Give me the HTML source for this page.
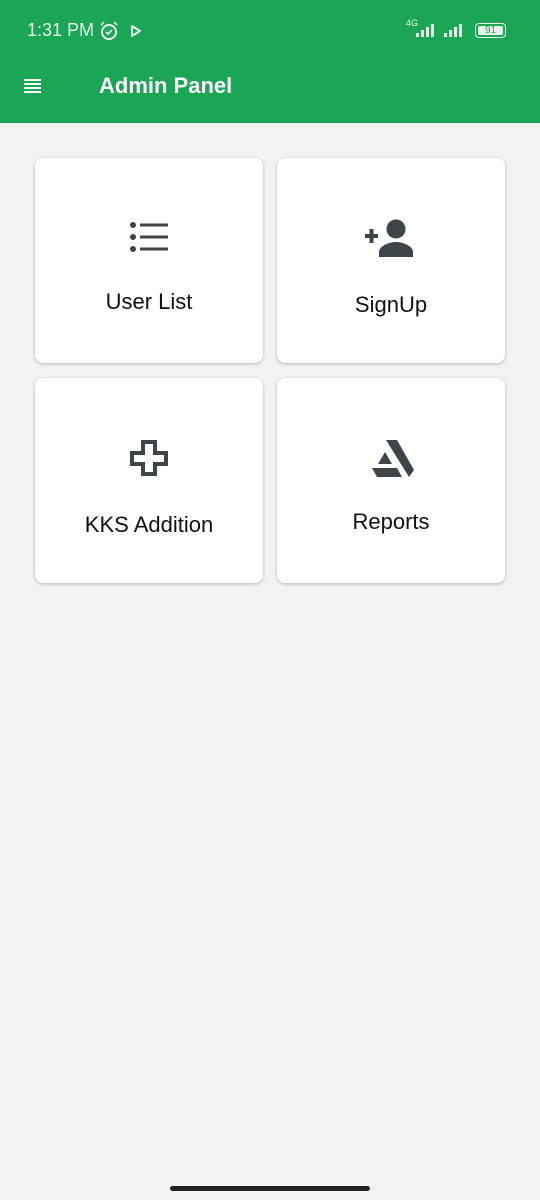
<!DOCTYPE html><html><head><style>
body{margin:0;width:540px;height:1200px;background:#f2f2f2;font-family:"Liberation Sans",Roboto,sans-serif;position:relative;overflow:hidden}
.hdr{position:absolute;left:0;top:0;width:540px;height:123px;background:#1aa655;color:#fff}
.card{position:absolute;width:228px;height:205px;background:#fff;border-radius:8px;box-shadow:0 1px 3px rgba(0,0,0,.25)}
.lbl{position:absolute;left:0;right:0;text-align:center;font-size:22px;color:#111}
svg{position:absolute}
</style></head><body>
<div class="hdr">
<div style="position:absolute;left:27px;top:20px;font-size:18px;color:#e8f5ec">1:31 PM</div>
<svg style="left:98px;top:20px" width="22" height="22" viewBox="0 0 22 22"><circle cx="11" cy="12" r="7" fill="none" stroke="#e8f5ec" stroke-width="2"/><path d="M8 12l2 2 4-4M3 5l3-3M19 5l-3-3" stroke="#e8f5ec" stroke-width="1.6" fill="none"/></svg>
<svg style="left:131px;top:25px" width="10" height="12"><path d="M1 1L9 6 1 11z" fill="none" stroke="#e8f5ec" stroke-width="2"/></svg>
<div style="position:absolute;left:406px;top:18px;font-size:9px;color:#e8f5ec">4G</div>
<svg style="left:414px;top:22px" width="56" height="16"><g fill="#e8f5ec"><rect x="2" y="11" width="3" height="4"/><rect x="7" y="8" width="3" height="7"/><rect x="12" y="5" width="3" height="10"/><rect x="17" y="2" width="3" height="13"/><rect x="30" y="11" width="3" height="4"/><rect x="35" y="8" width="3" height="7"/><rect x="40" y="5" width="3" height="10"/><rect x="45" y="2" width="3" height="13"/></g></svg>
<div style="position:absolute;left:475px;top:23px;width:29px;height:13px;border:1.5px solid #e8f5ec;border-radius:4px;font-size:10px;line-height:13px;text-align:center;color:#1aa655"><div style="position:absolute;left:2px;top:2px;right:2px;bottom:2px;background:#e8f5ec;border-radius:2px"></div><span style="position:relative">91</span></div>
<svg style="left:24px;top:79px" width="18" height="14"><g fill="#fff"><rect y="0" width="17" height="2"/><rect y="4" width="17" height="2"/><rect y="8" width="17" height="2"/><rect y="12" width="17" height="2"/></g></svg>
<div style="position:absolute;left:99px;top:73px;font-size:22px;font-weight:bold">Admin Panel</div>
</div>
<div class="card" style="left:35px;top:158px"><div class="lbl" style="top:131px">User List</div>
<svg style="left:95px;top:64px" width="38" height="30" viewBox="0 0 38 30"><g fill="#3d4548"><circle cx="3" cy="3" r="3"/><circle cx="3" cy="15" r="3"/><circle cx="3" cy="27" r="3"/><rect x="10" y="1.5" width="28" height="3"/><rect x="10" y="13.5" width="28" height="3"/><rect x="10" y="25.5" width="28" height="3"/></g></svg></div>
<div class="card" style="left:277px;top:158px"><div class="lbl" style="top:134px">SignUp</div>
<svg style="left:88px;top:61px" width="52" height="38" viewBox="0 0 52 38"><g fill="#3d4548"><rect x="0" y="15" width="13" height="4"/><rect x="4.5" y="10" width="4" height="14"/><circle cx="31" cy="10" r="9.5"/><path d="M14 38v-5c0-6 10-10 17-10s17 4 17 10v5z"/></g></svg></div>
<div class="card" style="left:35px;top:378px"><div class="lbl" style="top:134px">KKS Addition</div>
<svg style="left:95px;top:62px" width="38" height="36" viewBox="0 0 38 36"><path d="M13 2h12v11h11v11H25v10H13V24H2V13h11z" fill="none" stroke="#3d4548" stroke-width="4"/></svg></div>
<div class="card" style="left:277px;top:378px"><div class="lbl" style="top:131px">Reports</div>
<svg style="left:95px;top:62px" width="42" height="38" viewBox="0 0 42 38"><g fill="#3d4548"><path d="M14 0h11l17 30-5 7z"/><path d="M13 12l7 12H6z"/><path d="M0 28h25l5 9H5z"/></g></svg></div>
<div style="position:absolute;left:170px;top:1186px;width:200px;height:5px;border-radius:3px;background:#222"></div>
</body></html>
